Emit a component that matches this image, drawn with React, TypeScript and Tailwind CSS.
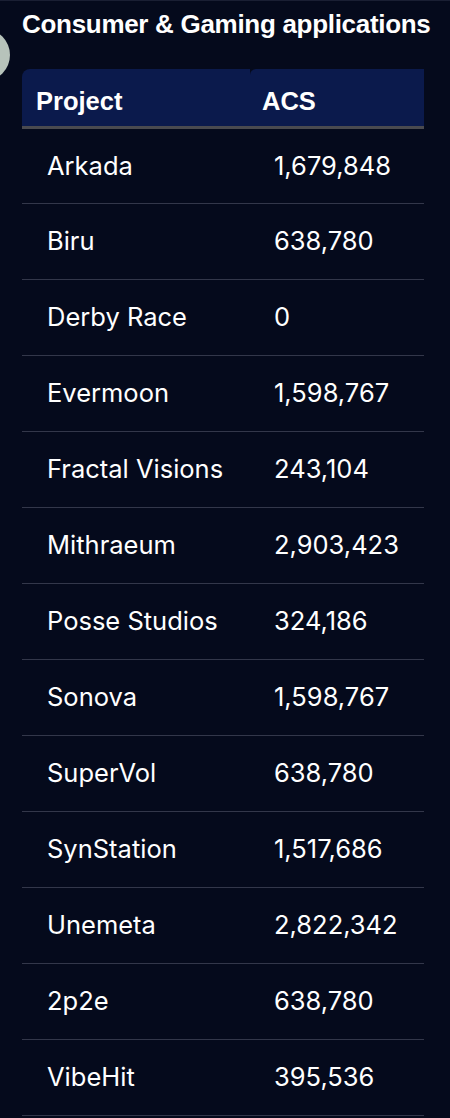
import React from 'react';

const rows: [string, string][] = [
  ['Arkada', '1,679,848'],
  ['Biru', '638,780'],
  ['Derby Race', '0'],
  ['Evermoon', '1,598,767'],
  ['Fractal Visions', '243,104'],
  ['Mithraeum', '2,903,423'],
  ['Posse Studios', '324,186'],
  ['Sonova', '1,598,767'],
  ['SuperVol', '638,780'],
  ['SynStation', '1,517,686'],
  ['Unemeta', '2,822,342'],
  ['2p2e', '638,780'],
  ['VibeHit', '395,536'],
];

export default function App() {
  return (
    <div className="relative min-h-[1118px] w-[450px] overflow-hidden bg-[#050a1c] border-t border-[#1a1f33]">
      {/* avatar bubble peeking in from the left */}
      <div className="absolute left-[-42px] top-[28px] w-[52px] h-[52px] rounded-full bg-[#b7c3bb]" />

      <div className="pl-[22px] pt-[8px]">
        <h2 className="text-[26px] leading-[30px] font-bold text-white font-['Liberation_Sans',Arial,sans-serif] tracking-[-0.3px]">
          Consumer &amp; Gaming applications
        </h2>

        <table className="mt-[30px] w-[402px] border-collapse table-fixed">
          <thead>
            <tr className="bg-[#0b1a4c] border-b-[3px] border-[#4a4a4f]">
              <th className="w-[228px] h-[58px] rounded-tl-[8px] pl-[14px] text-left text-[25.5px] font-bold text-white font-['Liberation_Sans',Arial,sans-serif] align-bottom pb-[5px]">
                Project
              </th>
              <th className="h-[58px] rounded-tl-[6px] pl-[12px] text-left text-[25.5px] font-bold text-white font-['Liberation_Sans',Arial,sans-serif] align-bottom pb-[5px]">
                ACS
              </th>
            </tr>
          </thead>
          <tbody>
            {rows.map(([name, acs]) => (
              <tr key={name} className="border-b border-[#33374a]">
                <td className="h-[76px] pl-[25px] pt-[1px] text-[25.5px] text-white font-['Inter',sans-serif]">{name}</td>
                <td className="h-[76px] pl-[24px] pt-[1px] text-[25.5px] text-white font-['Inter',sans-serif]">{acs}</td>
              </tr>
            ))}
          </tbody>
        </table>
      </div>
    </div>
  );
}
